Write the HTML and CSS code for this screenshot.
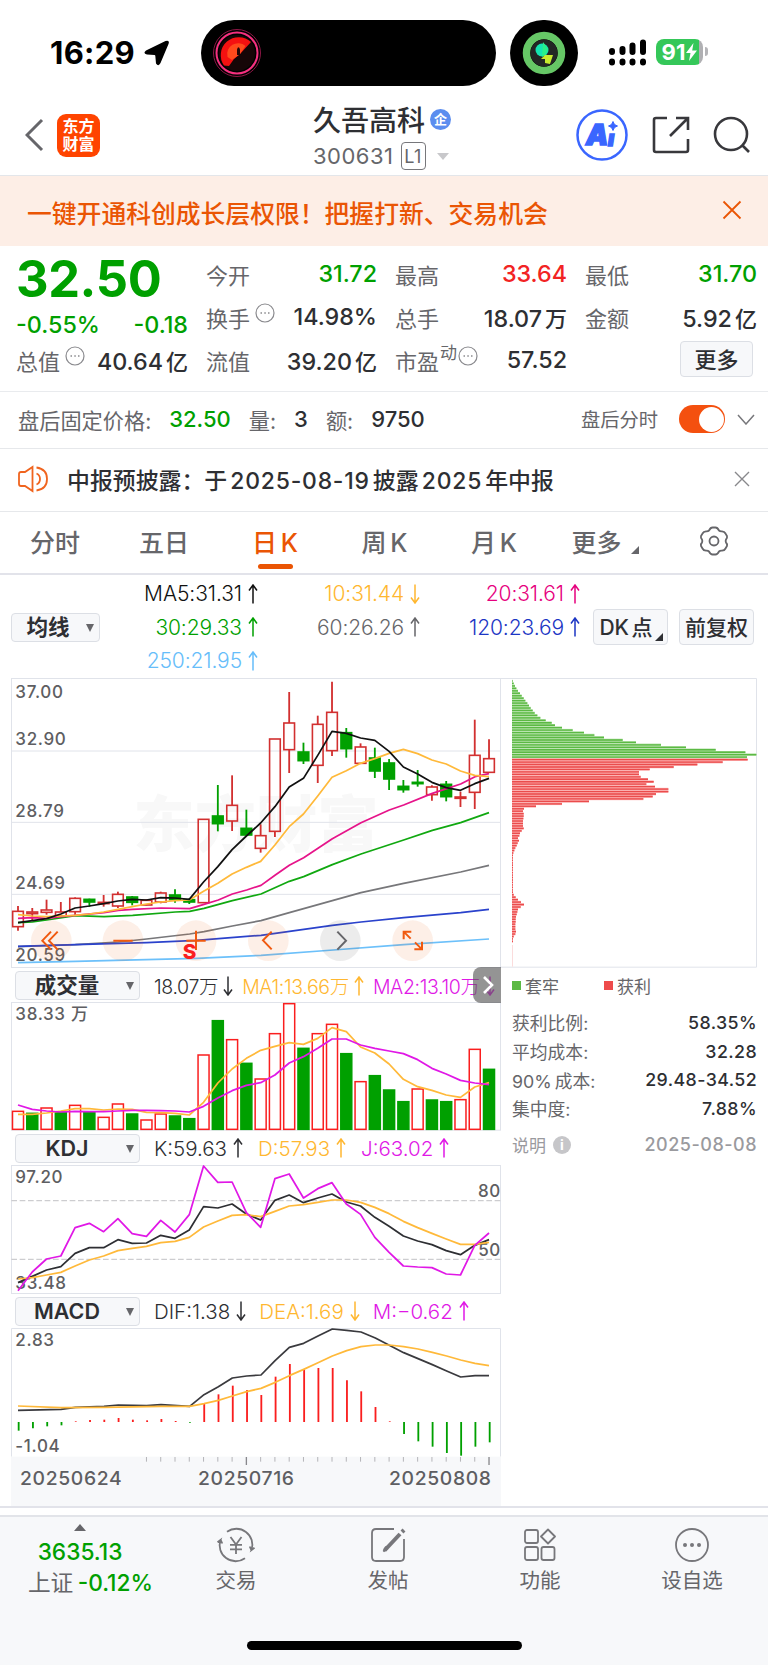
FILE: index.html
```html
<!DOCTYPE html>
<html lang="zh-CN">
<head>
  <meta charset="UTF-8">
  <meta name="viewport" content="width=device-width, initial-scale=1">
  <title>久吾高科 300631</title>
  <link rel="stylesheet" href="styles.css">
</head>
<body>
  <svg class="defs" width="0" height="0">
    <symbol id="up" viewBox="0 0 10 20"><path d="M5 19.500V1M1 6.500L5 1L9 6.500"/></symbol>
    <symbol id="down" viewBox="0 0 10 20"><path d="M5 .5V19M1 13.500L5 19L9 13.500"/></symbol>
    <symbol id="dots" viewBox="0 0 20 20"><circle cx="10" cy="10" r="9"/><path d="M5.500 10h1.500M9.300 10h1.500M13 10h1.500" stroke-width="1.700"/></symbol>
  </svg>

  <div class="status-bar">
    <span class="time">16:29</span>
    <svg class="location" viewBox="0 0 26 26"><path d="M2 10.500L21.500 1Q26 -.5 24.500 4L16.500 23Q14.500 27 12 23.500L11.300 15.800Q11.200 15 10.500 15L3 14.600Q-1.500 13.500 2 10.500Z"/></svg>
    <div class="island">
      <svg width="50" height="50" viewBox="0 0 50 50" fill="none">
        <circle cx="25" cy="25" r="23.500" stroke="#8c1745" stroke-width="1"/>
        <circle cx="25" cy="25" r="20.500" stroke="#f5307f" stroke-width="2"/>
        <circle cx="25" cy="25" r="18" fill="#160607"/>
        <path d="M12 37.500A18 18 0 0 1 39 14L28 26L22 31L17 38Z" fill="#f41111"/>
        <path d="M15.500 29A11 11 0 0 1 33.500 18L28 26L20 32Z" fill="#ff4a1c"/>
        <path d="M25 27V21.500Q26.500 17 28 21.500V27Z" fill="#240707"/>
      </svg>
    </div>
    <div class="bubble">
      <svg width="46" height="46" viewBox="0 0 46 46" fill="none">
        <circle cx="23" cy="23" r="17.500" stroke="#66c766" stroke-width="7.500"/>
        <circle cx="23" cy="23" r="13.500" fill="#232725"/>
        <circle cx="21" cy="20" r="6.500" fill="#14e5b0"/>
        <path d="M22 12l5 7-2 5-4 3z" fill="#29f08a"/>
        <path d="M24 25h8l-3 9-5-1v-4h-4z" fill="#c7ea2e"/>
      </svg>
    </div>
    <svg class="signal" width="38" height="27" viewBox="0 0 38 27">
      <g stroke="#000" stroke-width="6" stroke-linecap="round">
        <path d="M3 12v1M13.500 10v3M23.500 6.500v6.500M34 3.500v9.500M3 22.500v1M13.500 22.500v1M23.500 22.500v1M34 22.500v1"/>
      </g>
    </svg>
    <div class="battery"><span>91</span>
      <svg width="11" height="18" viewBox="0 0 11 18"><path d="M7.500 0L0 10h4.500L3 18L11 7.500H6.200Z" fill="#fff"/></svg>
    </div>
    <i class="battery-cap"></i>
  </div>

  <header class="header">
    <svg class="back" width="20" height="34" viewBox="0 0 20 34"><path d="M17 2L2 17L17 32"/></svg>
    <div class="brand"><span>东方</span><span>财富</span></div>
    <div class="stock">
      <div class="stock-name">久吾高科<span class="tag-corp">企</span></div>
      <div class="stock-code">300631<span class="level">L1</span><i class="caret"></i></div>
    </div>
    <div class="header-icons">
      <div class="ai">
        <svg width="52" height="52" viewBox="0 0 52 52"><circle cx="26" cy="26" r="24.500" fill="none" stroke="#3a66ff" stroke-width="2.500"/><text x="10" y="36">A</text><text class="ai-i" x="32" y="36.500">ı</text><path d="M37 12.500l1.500 3 3 1.500-3 1.500-1.500 3-1.500-3-3-1.500 3-1.500z" fill="#3a66ff" stroke="#3a66ff" stroke-width="1"/></svg>
      </div>
      <svg class="share" width="38" height="38" viewBox="0 0 38 38"><path d="M15 2H4Q2 2 2 4V34Q2 36 4 36H34Q36 36 36 34V23M24 2H36V14M36 2L18 20"/></svg>
      <svg class="search" width="38" height="38" viewBox="0 0 38 38"><circle cx="18" cy="18" r="16"/><path d="M29.500 29.500L36 36"/></svg>
    </div>
  </header>

  <div class="banner">
    <span>一键开通科创成长层权限！把握打新、交易机会</span>
    <svg width="20" height="20" viewBox="0 0 20 20"><path d="M1.500 1.500L18.500 18.500M18.500 1.500L1.500 18.500"/></svg>
  </div>

  <section class="quote">
    <div class="quote-main">
      <div class="price">32.50</div>
      <div class="row green change"><b>-0.55%</b><b>-0.18</b></div>
      <div class="row"><span>总值<svg class="dots"><use href="#dots"/></svg></span><b>40.64<em>亿</em></b></div>
    </div>
    <div class="quote-col">
      <div class="row"><span>今开</span><b class="green">31.72</b></div>
      <div class="row"><span>换手<svg class="dots"><use href="#dots"/></svg></span><b>14.98%</b></div>
      <div class="row"><span>流值</span><b>39.20<em>亿</em></b></div>
    </div>
    <div class="quote-col">
      <div class="row"><span>最高</span><b class="red">33.64</b></div>
      <div class="row"><span>总手</span><b>18.07<em>万</em></b></div>
      <div class="row"><span>市盈<sup>动</sup><svg class="dots tight"><use href="#dots"/></svg></span><b>57.52</b></div>
    </div>
    <div class="quote-col">
      <div class="row"><span>最低</span><b class="green">31.70</b></div>
      <div class="row"><span>金额</span><b>5.92<em>亿</em></b></div>
      <div class="row row-more"><button class="btn btn-more">更多</button></div>
    </div>
  </section>

  <section class="after-hours">
    <span class="ah-label">盘后固定价格:</span><b class="green ah-price">32.50</b>
    <span>量:</span><b class="ah-vol">3</b>
    <span>额:</span><b>9750</b>
    <span class="ah-switch">盘后分时</span>
    <i class="toggle"></i>
    <svg class="chevron" width="18" height="11" viewBox="0 0 18 11"><path d="M1 1L9 10L17 1"/></svg>
  </section>

  <section class="notice">
    <svg class="speaker" width="31" height="28" viewBox="0 0 31 28"><path d="M14.500 2V26L7 21H3Q1 21 1 19V9Q1 7 3 7H7ZM18.500 8.500Q22 10 22 14T18.500 19.500M18.500 2.500Q29 4 29 14T18.500 25.500"/></svg>
    <span class="notice-text">中报预披露：于 <i>2025-08-19</i> 披露 <i>2025</i> 年中报</span>
    <svg class="notice-close" width="16" height="16" viewBox="0 0 16 16"><path d="M1 1L15 15M15 1L1 15"/></svg>
  </section>

  <nav class="tabs">
    <a>分时</a>
    <a>五日</a>
    <a class="active">日 K</a>
    <a>周 K</a>
    <a>月 K</a>
    <a class="tab-more">更多<i class="corner"></i></a>
    <a><svg width="30" height="30" viewBox="0 0 30 30"><path d="M10 4.500Q11.500 1.500 13.500 1.500H16.500Q18.500 1.500 20 4.500Q21 5.500 23 5.300Q25.500 5.500 26.500 7.500L28 10Q28.500 12 27 13.500Q26.300 15 27 16.500Q28.500 18 28 20L26.500 22.500Q25.500 24.500 23 24.700Q21 24.500 20 25.500Q18.500 28.500 16.500 28.500H13.500Q11.500 28.500 10 25.500Q9 24.500 7 24.700Q4.500 24.500 3.500 22.500L2 20Q1.500 18 3 16.500Q3.700 15 3 13.500Q1.500 12 2 10L3.500 7.500Q4.500 5.500 7 5.300Q9 5.500 10 4.500Z"/><circle cx="15" cy="15" r="4.500"/></svg></a>
  </nav>

  <section class="ma-bar">
    <div class="select select-ma">均线</div>
    <div class="ma-grid">
      <span class="c-black">MA5:31.31<svg class="arr"><use href="#up"/></svg></span>
      <span class="c-yellow">10:31.44<svg class="arr"><use href="#down"/></svg></span>
      <span class="c-pink">20:31.61<svg class="arr"><use href="#up"/></svg></span>
      <span class="c-green">30:29.33<svg class="arr"><use href="#up"/></svg></span>
      <span class="c-gray">60:26.26<svg class="arr"><use href="#up"/></svg></span>
      <span class="c-blue">120:23.69<svg class="arr"><use href="#up"/></svg></span>
      <span class="c-sky">250:21.95<svg class="arr"><use href="#up"/></svg></span>
    </div>
    <div class="ma-buttons">
      <button class="btn btn-dk">DK 点<i class="corner"></i></button>
      <button class="btn">前复权</button>
    </div>
  </section>

  <main class="charts">
    <div class="charts-left">
      <svg id="kline" class="kline" viewBox="33 324 1470 870"></svg>
      <div class="indicator">
        <div class="select">成交量</div>
        <div class="values volume-values">
          <span>18.07万<svg class="arr"><use href="#down"/></svg></span>
          <span class="c-yellow">MA1:13.66万<svg class="arr"><use href="#up"/></svg></span>
          <span class="c-magenta">MA2:13.10万<svg class="arr"><use href="#down"/></svg></span>
        </div>
        <div class="expand"><svg width="12" height="20" viewBox="0 0 12 20"><path d="M2 2L10 10L2 18"/></svg></div>
      </div>
      <svg id="volume" class="sub" viewBox="33 111 1470 387"></svg>
      <div class="indicator">
        <div class="select">KDJ</div>
        <div class="values">
          <span>K:59.63<svg class="arr"><use href="#up"/></svg></span>
          <span class="c-yellow">D:57.93<svg class="arr"><use href="#up"/></svg></span>
          <span class="c-magenta">J:63.02<svg class="arr"><use href="#up"/></svg></span>
        </div>
      </div>
      <svg id="kdj" class="sub" viewBox="33 15 1470 387"></svg>
      <div class="indicator">
        <div class="select">MACD</div>
        <div class="values macd-values">
          <span>DIF:1.38<svg class="arr"><use href="#down"/></svg></span>
          <span class="c-yellow">DEA:1.69<svg class="arr"><use href="#down"/></svg></span>
          <span class="c-magenta">M:−0.62<svg class="arr"><use href="#up"/></svg></span>
        </div>
      </div>
      <svg id="macd" class="macd" viewBox="33 504 1470 534"></svg>
    </div>
    <aside class="charts-right">
      <svg id="chips" class="chips" viewBox="3 24 768 870"></svg>
      <div class="legend"><span><i class="sq sq-green"></i>套牢</span><span><i class="sq sq-red"></i>获利</span></div>
      <dl class="chip-stats">
        <dt>获利比例:</dt><dd>58.35%</dd>
        <dt>平均成本:</dt><dd>32.28</dd>
        <dt>90% 成本:</dt><dd>29.48-34.52</dd>
        <dt>集中度:</dt><dd>7.88%</dd>
      </dl>
      <div class="chip-note"><span>说明<i class="info">i</i></span><span>2025-08-08</span></div>
    </aside>
  </main>

  <footer class="bottom">
    <div class="index">
      <i class="caret-up"></i>
      <b class="green">3635.13</b>
      <div>上证 <b class="green">-0.12%</b></div>
    </div>
    <div class="item">
      <svg width="40" height="36" viewBox="0 0 40 36"><path d="M11 4.800A16 16 0 0 1 35.500 23L38.500 20.800M35.500 23.500L33.700 19.500M29 31.200A16 16 0 0 1 4.500 13L1.500 15.200M4.500 12.500L6.300 16.500M14.500 10L20 17.500L25.500 10M20 17.500V27M14 17.800H26M14 22.300H26"/></svg>
      <span>交易</span>
    </div>
    <div class="item">
      <svg width="36" height="36" viewBox="0 0 36 36"><path d="M24 2H6Q2 2 2 6V30Q2 34 6 34H30Q34 34 34 30V12"/><path d="M30 7L14.500 23.500" stroke-width="4"/><path d="M32 5L34 3" stroke-width="4"/><path d="M13.500 24.500L17 22L15.500 20.500Z"/></svg>
      <span>发帖</span>
    </div>
    <div class="item">
      <svg width="32" height="34" viewBox="0 0 32 34"><rect x="1" y="2" width="13" height="13" rx="2"/><path d="M24 1.500L31 8.500L24 15.500L17 8.500Z" stroke-linejoin="round"/><rect x="1" y="19" width="13" height="13" rx="2"/><rect x="17.500" y="19" width="13" height="13" rx="2"/></svg>
      <span>功能</span>
    </div>
    <div class="item">
      <svg width="36" height="36" viewBox="0 0 36 36"><circle cx="18" cy="18" r="16"/><path d="M11 18h.01M18 18h.01M25 18h.01" stroke-width="4" stroke-linecap="round"/></svg>
      <span>设自选</span>
    </div>
    <div class="home-indicator"></div>
  </footer>

  <script src="charts.js"></script>
</body>
</html>
```

FILE: styles.css
```css
* {
  box-sizing: border-box;
}

body {
  margin: 0;
  width: 768px;
  height: 1665px;
  overflow: hidden;
  display: flex;
  flex-direction: column;
  background: #fff;
  color: #2e2f33;
  font-family: Inter, "Noto Sans CJK SC", sans-serif;
  font-size: 22px;
}

svg {
  flex: none;
}

i, em {
  font-style: normal;
}

b {
  font-weight: 500;
}

.defs {
  position: absolute;
}

.green { color: #00a000; }
.red { color: #f22323; }

/* status bar */
.status-bar {
  height: 104px;
  flex: none;
  display: flex;
  align-items: center;
  padding: 2px 0 0 50px;
}

.time {
  width: 94px;
  margin-top: -2px;
  font-size: 31px;
  font-weight: 700;
  letter-spacing: 0.3px;
  color: #000;
}

.location {
  width: 26px;
  height: 26px;
}

.island {
  width: 295px;
  height: 66px;
  margin-left: 31px;
  padding: 0 11px;
  border-radius: 33px;
  background: #000;
  display: flex;
  align-items: center;
}

.bubble {
  width: 68px;
  height: 66px;
  margin: 0 31px 0 14px;
  border-radius: 34px;
  background: #000;
  display: flex;
  align-items: center;
  justify-content: center;
}

.battery {
  width: 47px;
  height: 26px;
  margin: -3px 0 0 9px;
  border-radius: 8px;
  background: linear-gradient(90deg, #35c759 91%, #b0b0b3 91%);
  display: flex;
  align-items: center;
  justify-content: center;
  gap: 1px;
  color: #fff;
  font-size: 22px;
  font-weight: 700;
}

.battery-cap {
  width: 3px;
  height: 9px;
  margin: -3px 0 0 2px;
  border-radius: 0 3px 3px 0;
  background: #b5b5b8;
}

.signal {
  margin-top: -1px;
}

/* header */
.header {
  height: 72px;
  flex: none;
  display: flex;
  align-items: center;
  padding: 0 17px 9px 25px;
  border-bottom: 1px solid #e3e6ea;
}

.back path {
  fill: none;
  stroke: #66666a;
  stroke-width: 3;
}

.brand {
  width: 43px;
  height: 43px;
  margin-left: 12px;
  padding-top: 3px;
  border-radius: 9px;
  background: #ff4400;
  color: #fff;
  font-size: 16px;
  font-weight: 700;
  line-height: 18px;
  display: flex;
  flex-direction: column;
  align-items: center;
}

.stock {
  width: 152px;
  margin: 7px 0 0 213px;
}

.stock-name {
  display: flex;
  align-items: center;
  height: 35px;
  font-size: 28px;
  font-weight: 500;
}

.tag-corp {
  width: 21px;
  height: 21px;
  margin-left: 5px;
  border-radius: 50%;
  background: #5b8def;
  color: #fff;
  font-size: 13px;
  font-weight: 700;
  line-height: 20px;
  text-align: center;
}

.stock-code {
  display: flex;
  align-items: center;
  height: 39px;
  color: #66666a;
  font-size: 22px;
  letter-spacing: 0.5px;
}

.level {
  width: 25px;
  height: 28px;
  margin-left: 7px;
  border: 1px solid #77777b;
  border-radius: 4px;
  font-size: 18px;
  line-height: 27px;
  text-align: center;
}

.caret {
  margin-left: 11px;
  border: 6.5px solid transparent;
  border-top: 7px solid #c8c8cb;
  border-bottom: 0;
}

.header-icons {
  margin-left: auto;
  display: flex;
  align-items: center;
}

.ai {
  height: 52px;
  margin-right: 24px;
}

.ai text {
  fill: #3a66ff;
  stroke: #3a66ff;
  stroke-width: 1.5;
  font-size: 28px;
  font-weight: 900;
  font-style: italic;
}

.ai .ai-i {
  font-size: 21px;
}

.share,
.search {
  fill: none;
  stroke: #38383c;
  stroke-width: 2.6;
}

.search {
  margin-left: 23px;
}

/* promo banner */
.banner {
  height: 70px;
  flex: none;
  display: flex;
  align-items: center;
  justify-content: space-between;
  padding: 1px 26px 0 27px;
  background: #fdeee6;
  color: #ea5504;
  font-size: 24.8px;
  font-weight: 500;
}

.banner svg {
  margin-top: -3px;
  fill: none;
  stroke: #ea5504;
  stroke-width: 1.8;
}

/* quote */
.quote {
  height: 146px;
  flex: none;
  display: grid;
  grid-template-columns: 172px 171px 172px 172px;
  gap: 18px;
  padding: 6px 12px 0 16px;
  border-bottom: 1px solid #e9ebee;
}

.quote .row {
  height: 43px;
  display: flex;
  align-items: center;
  justify-content: space-between;
  font-size: 22px;
  white-space: nowrap;
}

.row span {
  color: #66666a;
  display: flex;
  align-items: center;
}

.row b {
  font-size: 23.3px;
}

.row em {
  margin-left: 3px;
  font-size: 22px;
}

.price {
  height: 50px;
  color: #00a000;
  font-size: 50.5px;
  font-weight: 700;
  line-height: 54px;
  letter-spacing: -0.4px;
}

.quote .change {
  height: 36px;
  padding-top: 8px;
}

.dots {
  width: 20px;
  height: 20px;
  margin: -7px 0 0 5px;
  fill: none;
  stroke: #8a8a8e;
  stroke-width: 1.2;
}

.dots.tight {
  margin-left: 1px;
}

.row sup {
  font-size: 17px;
  line-height: 1;
  margin: -12px 0 0 1px;
  vertical-align: baseline;
}

.btn {
  padding: 0 0 2px;
  height: 36px;
  border: 1px solid #dcdfe5;
  border-radius: 4px;
  background: #f7f8fa;
  color: #2e2f33;
  font-family: inherit;
  font-size: 22px;
  font-weight: 500;
}

.quote .row-more {
  justify-content: flex-end;
  padding-right: 4px;
  padding-bottom: 2px;
}

.btn-more {
  width: 73px;
}

/* after hours */
.after-hours {
  height: 57px;
  flex: none;
  display: flex;
  align-items: center;
  padding: 0 13px 2px 18px;
  border-bottom: 1px solid #e6e8eb;
  color: #66666a;
  font-size: 21.2px;
}

.after-hours b {
  margin: 0 18px;
  color: #2e2f33;
  font-size: 22px;
}

.after-hours b.green {
  color: #00a000;
}

.ah-switch {
  margin-left: auto;
  font-size: 19.3px;
}

.toggle {
  width: 46px;
  height: 28px;
  margin: 0 12px 0 21px;
  padding: 1.5px;
  border-radius: 14px;
  background: #f4500f;
}

.toggle::after {
  content: "";
  display: block;
  width: 25px;
  height: 25px;
  margin-left: auto;
  border-radius: 50%;
  background: #fff;
}

.chevron {
  fill: none;
  stroke: #77777b;
  stroke-width: 1.5;
}

/* notice */
.notice {
  height: 63px;
  flex: none;
  display: flex;
  align-items: center;
  padding: 0 18px 2px;
  border-bottom: 1px solid #e6e8eb;
  font-size: 22.9px;
  font-weight: 500;
}

.notice svg {
  fill: none;
  stroke: #88888c;
  stroke-width: 1.4;
}

.notice .speaker {
  stroke: #f0641e;
  stroke-width: 1.8;
}

.notice-text {
  margin-left: 18px;
  word-spacing: -3px;
  white-space: nowrap;
}

.notice-text i {
  letter-spacing: 0.8px;
}

.notice-close {
  margin-left: auto;
}

/* tabs */
.tabs {
  height: 63px;
  flex: none;
  display: grid;
  grid-template-columns: 110px 108px 114px 105px 114px 108px 109px;
  align-items: center;
  border-bottom: 2px solid #e2e3ea;
  color: #66666a;
  font-size: 25px;
  font-weight: 500;
  word-spacing: -3px;
}

.tabs a {
  height: 61px;
  padding-bottom: 3px;
  display: flex;
  align-items: center;
  justify-content: center;
  position: relative;
}

.tabs .active {
  color: #ea5504;
}

.tabs .active::after {
  content: "";
  position: absolute;
  bottom: 4px;
  width: 35px;
  height: 5px;
  border-radius: 3px;
  background: #ea5504;
}

.tabs svg {
  fill: none;
  stroke: #66666a;
  stroke-width: 1.8;
}

.corner {
  border-left: 8px solid transparent;
  border-bottom: 8px solid currentColor;
}

.tab-more .corner {
  margin: 18px 0 0 9px;
}

/* moving averages */
.ma-bar {
  height: 103px;
  flex: none;
  display: flex;
  align-items: center;
  padding: 1px 0 0 11px;
}

.select {
  width: 125px;
  height: 29px;
  padding-right: 21px;
  border: 1px solid #dcdfe5;
  border-radius: 4px;
  background: #f7f8fa;
  font-size: 21.5px;
  font-weight: 600;
  line-height: 26px;
  text-align: center;
  position: relative;
  flex: none;
}

.select::after {
  content: "";
  position: absolute;
  right: 5px;
  top: 10px;
  border: 4.5px solid transparent;
  border-top: 8px solid #66666a;
  border-bottom: 0;
}

.select-ma {
  width: 89px;
  padding-right: 15px;
}

.ma-grid {
  display: grid;
  grid-template-columns: 158px 162px 160px;
  grid-auto-rows: 33.500px;
  align-items: center;
  justify-items: end;
  font-size: 21px;
  font-weight: 300;
  letter-spacing: -0.1px;
}

.arr {
  width: 10px;
  height: 20px;
  margin-left: 6px;
  vertical-align: -2.5px;
  fill: none;
  stroke: currentColor;
  stroke-width: 1.5;
}

.c-black { color: #111; }
.c-yellow { color: #ffb730; }
.c-pink { color: #e6007e; }
.c-green { color: #00a000; }
.c-gray { color: #66666a; }
.c-blue { color: #1c36c4; }
.c-sky { color: #66bdfa; }
.c-magenta { color: #e018e6; }

.ma-buttons {
  display: flex;
  gap: 11px;
  margin-left: 13px;
}

.ma-buttons .btn {
  width: 75px;
  font-size: 21px;
  white-space: nowrap;
  word-spacing: -3px;
  position: relative;
}

.ma-buttons .btn-dk {
  padding-right: 9px;
}

.btn-dk .corner {
  position: absolute;
  right: 4px;
  bottom: 3px;
}

/* charts */
.charts {
  height: 830px;
  flex: none;
  display: flex;
  padding-left: 11px;
  border-bottom: 2px solid #e2e3ea;
}

.charts-left {
  width: 490px;
}

.charts-left > svg,
.charts-right > svg {
  display: block;
}

.kline {
  width: 490px;
  height: 290px;
}

.sub {
  width: 490px;
  height: 129px;
}

.macd {
  width: 490px;
  height: 178px;
}

.charts svg text {
  font-size: 51px;
  font-weight: 500;
  fill: #5e5e62;
  letter-spacing: 2px;
}

.charts svg .date {
  font-size: 58px;
  letter-spacing: 1.9px;
}

.charts svg .watermark {
  font-size: 184px;
  font-weight: 900;
  letter-spacing: 0;
  fill: #f8f8f8;
}

.charts svg .sell {
  font-size: 62px;
  font-weight: 800;
  fill: #fa1e1e;
}

.indicator {
  height: 34px;
  display: flex;
  align-items: center;
  padding-left: 4px;
  position: relative;
}

.values {
  margin-left: 14px;
  display: flex;
  gap: 15px;
  font-size: 20.5px;
  font-weight: 300;
  white-space: nowrap;
}

.macd-values {
  gap: 13px;
}

.volume-values {
  gap: 9px;
  font-size: 19.5px;
  letter-spacing: -0.35px;
}

.volume-values .arr {
  margin-left: 5px;
}

.expand {
  position: absolute;
  right: 0;
  top: -1px;
  width: 28px;
  height: 36px;
  padding: 8px 9px;
  border-radius: 8px 0 0 8px;
  background: rgba(90, 90, 90, 0.65);
}

.expand svg {
  display: block;
  fill: none;
  stroke: #fff;
  stroke-width: 2.6;
}

.charts-right {
  width: 256px;
}

.chips {
  width: 256px;
  height: 290px;
}

.legend {
  display: flex;
  margin: 5px 0 0 11px;
  height: 24px;
  align-items: center;
  color: #66666a;
  font-size: 17px;
}

.legend span {
  width: 92px;
  display: flex;
  align-items: center;
}

.sq {
  width: 9px;
  height: 9px;
  margin-right: 4px;
}

.sq-green { background: #5cb944; }
.sq-red { background: #ee4b4b; }

.chip-stats {
  margin: 11px 0 0 11px;
  display: grid;
  grid-template-columns: auto auto;
  grid-auto-rows: 28.700px;
  align-items: center;
  color: #66666a;
  font-size: 17.8px;
  word-spacing: -2px;
}

.chip-stats dd {
  margin: 0;
  color: #2e2f33;
  font-weight: 500;
  text-align: right;
  letter-spacing: 0.4px;
}

.chip-note {
  margin: 8px 0 0 11px;
  height: 28px;
  display: flex;
  align-items: center;
  justify-content: space-between;
  color: #9a9a9e;
  font-size: 17px;
}

.chip-note span {
  display: flex;
  align-items: center;
}

.chip-note span:last-child {
  font-size: 18px;
  font-weight: 500;
  letter-spacing: 0.5px;
}

.info {
  width: 18px;
  height: 18px;
  margin-left: 7px;
  border-radius: 50%;
  background: #c6c6c9;
  color: #fff;
  font-size: 14px;
  font-weight: 700;
  line-height: 18px;
  text-align: center;
}

/* bottom bar */
.bottom {
  height: 150px;
  flex: none;
  margin-top: 7px;
  border-top: 2px solid #e2e4e9;
  background: #f7f8fa;
  display: flex;
  color: #66666a;
  font-size: 20.5px;
  position: relative;
}

.index {
  width: 160px;
  display: flex;
  flex-direction: column;
  align-items: center;
  padding: 7px 0 0 0;
  font-size: 22.7px;
  line-height: 31px;
  white-space: nowrap;
}

.index > div {
  margin-left: 21px;
  word-spacing: -2px;
}

.caret-up {
  border: 6.5px solid transparent;
  border-bottom: 7px solid #66666a;
  border-top: 0;
  margin-bottom: 5px;
}

.item {
  width: 152px;
  display: flex;
  flex-direction: column;
  align-items: center;
  padding-top: 10px;
}

.item svg {
  height: 36px;
  fill: none;
  stroke: #77777b;
  stroke-width: 1.8;
}

.item span {
  margin-top: 3px;
  line-height: 30px;
}

.home-indicator {
  position: absolute;
  left: 247px;
  bottom: 15px;
  width: 275px;
  height: 9px;
  border-radius: 5px;
  background: #000;
}
```

FILE: charts.js
```js
const START = 54;
const STEP = 42.82;
const RED = '#d23030';
const GREEN = '#00a000';
const GRID = '#e0e3ea';

const cx = i => START + STEP * i;

function line(x1, y1, x2, y2, color, w = 3, extra = '') {
  return `<line x1="${x1}" y1="${y1}" x2="${x2}" y2="${y2}" stroke="${color}" stroke-width="${w}" ${extra}/>`;
}

function rect(x, y, w, h, fill, stroke = 'none', sw = 3) {
  return `<rect x="${x}" y="${y}" width="${w}" height="${h}" fill="${fill}" stroke="${stroke}" stroke-width="${sw}"/>`;
}

function text(x, y, str, cls = '', anchor = 'start') {
  return `<text x="${x}" y="${y}" class="${cls}" text-anchor="${anchor}">${str}</text>`;
}

// one value per day
function series(values, color, w = 5.2) {
  const pts = values.map((v, i) => `${cx(i)},${v}`).join(' ');
  return poly(pts, color, w);
}

function poly(pts, color, w = 5.2) {
  return `<polyline points="${pts}" fill="none" stroke="${color}" stroke-width="${w}" stroke-linejoin="round"/>`;
}

// K line: [up, high, top, bottom, low]
const candles = [
  [1, 1008, 1024, 1070, 1082], [1, 1014, 1026, 1031, 1052], [1, 989, 1020, 1027, 1034],
  [1, 996, 1026, 1038, 1040], [1, 982, 985, 1025, 1034], [0, 986, 988, 996, 1010],
  [1, 975, 997, 1001, 1010], [1, 965, 973, 1008, 1014], [0, 978, 981, 997, 1006],
  [1, 988, 991, 1005, 1006], [1, 965, 969, 996, 1000], [0, 958, 975, 989, 998],
  [0, 985, 989, 996, 1002], [1, 748, 748, 998, 998], [0, 645, 738, 761, 784],
  [1, 616, 706, 753, 783], [0, 719, 775, 795, 797], [1, 763, 797, 835, 848],
  [1, 507, 507, 784, 801], [1, 366, 459, 539, 609], [0, 518, 546, 572, 582],
  [1, 437, 463, 586, 639], [1, 335, 427, 542, 558], [0, 474, 488, 536, 563],
  [1, 520, 531, 580, 582], [0, 533, 564, 603, 624], [0, 567, 579, 627, 660],
  [0, 630, 649, 659, 668], [0, 600, 637, 641, 650], [1, 646, 651, 674, 692],
  [0, 633, 643, 680, 694], [1, 665, 681, 685, 711], [1, 449, 556, 667, 717],
  [1, 508, 566, 607, 607]
];

function drawKline() {
  let s = text(400, 832, '东方财富', 'watermark');
  s += rect(34.5, 325.5, 1467, 867, 'none', GRID);
  [543, 757, 973].forEach(y => { s += line(34, y, 1503, y, GRID); });

  candles.forEach(([up, hi, top, bottom, lo], i) => {
    const x = cx(i);
    const color = up ? RED : GREEN;
    s += line(x, hi, x, top, color, 5.5) + line(x, bottom, x, lo, color, 5.5);
    s += rect(x - 16, top, 32, bottom - top, up ? 'none' : color, color, 4.8);
  });

  s += poly('54,1178 226,1174 590,1165 783,1156 1000,1140 1211,1124 1467,1107', '#6cc0fa');
  s += poly('54,1130 226,1124 355,1116 440,1107 569,1092 612,1085 697,1068 783,1052 868,1028 997,992 1083,968 1211,940 1382,906 1467,886', '#77777a');
  s += poly('54,1129 226,1124 440,1118 590,1111 783,1096 997,1066 1083,1056 1211,1043 1382,1028 1467,1018', '#2a42cc');
  s += poly('54,1058 97,1056 140,1050 226,1037 312,1040 398,1036 526,1026 569,1024 612,1015 697,992 783,972 868,934 911,920 997,884 1083,852 1211,810 1297,781 1382,758 1467,728', '#10a810');
  s += poly('54,1045 97,1043 140,1045 183,1040 226,1036 312,1028 355,1021 398,1018 483,1014 569,1016 612,1003 655,990 697,972 740,960 783,946 826,915 868,886 911,863 954,835 997,806 1083,758 1168,720 1211,705 1297,670 1340,656 1382,642 1425,620 1467,611', '#e6148a');
  s += series([1034, 1038, 1040, 1038, 1036, 1032, 1026, 1018, 1010, 1002, 996, 992, 990, 964, 940, 912, 892, 874, 825, 770, 732, 678, 622, 602, 580, 566, 550, 538, 551, 570, 582, 603, 616, 620], '#ffb93a');
  s += series([1058, 1052, 1046, 1032, 1014, 1008, 1001, 993, 988, 990, 983, 984, 988, 936, 890, 839, 798, 759, 710, 651, 625, 556, 484, 490, 504, 511, 544, 591, 612, 637, 653, 661, 641, 625], '#111');

  s += text(46, 383, '37.00') + text(46, 525, '32.90') + text(46, 740, '28.79');
  s += text(46, 956, '24.69') + text(46, 1172, '20.59');

  // floating controls
  [154, 369, 588, 805, 1021, 1238].forEach((x, i) => {
    s += `<circle cx="${x}" cy="1112" r="61" fill="${i === 4 ? '#505050' : '#f06e28'}" fill-opacity=".11"/>`;
  });
  s += '<g fill="none" stroke="#f0590f" stroke-width="6">' +
    '<path d="M153 1085L127 1112L153 1139M173 1085L147 1112L173 1139"/>' +
    '<path d="M340 1112H398M559 1112H617M588 1082V1140"/>' +
    '<path d="M815 1085L789 1111L815 1138"/>' +
    '<path d="M1211 1108V1085H1234M1211 1085L1232 1106M1266 1115V1138H1243M1266 1138L1245 1117"/></g>' +
    '<path d="M1012 1085L1038 1112L1012 1139" fill="none" stroke="#66666a" stroke-width="6"/>';
  s += text(548, 1166, 'S', 'sell');
  document.getElementById('kline').innerHTML = s;
}

// volume: [up, top]
const volumes = [
  [1, 438], [0, 444], [1, 428], [0, 440], [1, 420], [0, 440], [1, 456], [1, 416], [0, 446],
  [1, 464], [1, 446], [0, 452], [0, 460], [1, 269], [0, 166], [1, 223], [0, 294], [1, 341],
  [1, 205], [1, 115], [0, 249], [1, 205], [1, 177], [0, 265], [1, 349], [0, 331], [0, 374],
  [0, 409], [1, 371], [0, 404], [0, 409], [1, 403], [1, 252], [0, 312]
];

function drawVolume() {
  let s = rect(34.5, 112.5, 1467, 383, 'none', GRID);
  volumes.forEach(([up, top], i) => {
    const color = up ? '#fa1e1e' : GREEN;
    s += rect(cx(i) - 16.5, top + 1, 33, 492 - top, up ? '#fff' : color, color, 4.5);
  });
  s += series([448, 448, 444, 438, 431, 431, 435, 432, 433, 442, 443, 445, 450, 412, 354, 312, 280, 256, 244, 233, 238, 220, 188, 200, 246, 264, 297, 343, 365, 376, 390, 397, 366, 353], '#ffb93a');
  s += series([420, 433, 438, 441, 439, 440, 440, 438, 436, 436, 437, 438, 441, 424, 399, 377, 361, 353, 330, 294, 275, 250, 222, 222, 240, 250, 258, 266, 284, 310, 327, 346, 354, 359], '#e018e6');
  s += text(46, 164, '38.33 万');
  document.getElementById('volume').innerHTML = s;
}

function drawKdj() {
  let s = rect(34.5, 16.5, 1467, 384, 'none', GRID);
  [122, 298].forEach(y => { s += line(34, y, 1503, y, '#cdcdd0', 4, 'stroke-dasharray="17 8"'); });
  s += text(46, 68, '97.20') + text(46, 388, '33.48');
  s += text(1503, 110, '80', '', 'end') + text(1503, 287, '50', '', 'end');
  s += series([368, 349, 330, 320, 280, 263, 263, 239, 250, 249, 226, 235, 210, 140, 144, 132, 162, 180, 121, 105, 128, 114, 102, 126, 138, 172, 199, 228, 243, 254, 272, 284, 256, 239], '#2e2f33');
  s += series([357, 353, 345, 337, 318, 300, 288, 272, 265, 259, 248, 244, 232, 201, 183, 166, 164, 170, 154, 138, 134, 127, 120, 120, 127, 142, 161, 184, 203, 220, 237, 253, 253, 247], '#ffb93a');
  s += series([392, 336, 297, 288, 203, 190, 215, 176, 221, 229, 181, 216, 164, 18, 67, 66, 158, 202, 56, 42, 114, 86, 68, 132, 163, 232, 277, 318, 321, 323, 342, 345, 256, 219], '#e018e6');
  document.getElementById('kdj').innerHTML = s;
}

function drawMacd() {
  const bars = [812, 805, 799, 796, 784, 780, 779, 774, 779, 781, 777, 783, 788, 732, 703, 677, 690, 705, 650, 612, 628, 624, 624, 661, 694, 741, 784, 822, 844, 860, 879, 887, 860, 847];
  let s = '<path d="M34.500 890V505.500H1501.500V890" fill="none" stroke="' + GRID + '" stroke-width="3"/>';
  s += rect(33, 890, 1470, 148, '#f7f8fa');
  bars.forEach((v, i) => {
    s += line(cx(i) + 2, 786, cx(i) + 2, v, v < 786 ? '#fa1e1e' : GREEN, 5.5);
  });
  s += poly('54,751 183,748 226,742 312,739 355,735 440,737 483,734 569,739 612,704 655,680 697,654 740,648 783,645 826,601 868,562 911,550 954,528 997,507 1040,511 1083,516 1126,534 1168,556 1211,578 1254,596 1297,614 1340,633 1382,651 1425,647 1467,647', '#3a3a3e');
  s += poly('54,738 183,743 312,742 483,739 569,739 612,731 655,721 697,708 740,695 783,685 826,667 868,647 911,628 954,608 997,588 1040,572 1083,560 1126,555 1168,555 1211,560 1254,567 1297,577 1340,588 1382,600 1425,610 1467,617', '#ffb93a');
  for (let i = 9; i < 34; i++) {
    const big = i === 16 || i === 33;
    s += line(cx(i), 891, cx(i), big ? 915 : 905, big ? '#88888c' : '#b4b4b8', big ? 4 : 3);
  }
  s += text(46, 559, '2.83') + text(46, 877, '-1.04');
  s += text(60, 975, '20250624', 'date') + text(739, 975, '20250716', 'date', 'middle') + text(1475, 975, '20250808', 'date', 'end');
  document.getElementById('macd').innerHTML = s;
}

// cost distribution, bar ends from the top price down
const trapped = [38, 41, 45, 49, 54, 60, 65, 71, 76, 82, 87, 92, 98, 104, 112, 121, 137, 155, 165, 186, 218, 252, 283, 312, 368, 408, 483, 558, 647, 736, 769, 741];
const profit = [743, 668, 592, 521, 449, 417, 417, 422, 444, 461, 439, 465, 505, 505, 468, 458, 430, 267, 186, 108, 72, 69, 71, 71, 70, 69, 69, 69, 71, 65, 60, 58, 54, 57, 53, 50, 46, 43, 40,
  39, 39, 39, 39, 39, 39, 39, 39, 39, 39, 39, 39, 39, 39, 39, 39, 41, 47, 54, 63, 72, 62, 54, 52, 50, 48, 47, 47, 46, 46, 46, 48, 46, 41, 39, 39];

function drawChips() {
  let s = '<path d="M3 25.500H769.500V891.500H3" fill="none" stroke="' + GRID + '" stroke-width="3"/>';
  const pitch = 7.37;
  trapped.forEach((x, i) => {
    const y = 33 + i * pitch;
    s += rect(36, y - 3.7, x - 36, 7.4, '#a6dc98') + line(36, y, x, y, '#5cb944', 4);
  });
  profit.forEach((x, i) => {
    const y = 33 + (i + trapped.length) * pitch;
    s += rect(36, y - 3.7, x - 36, 7.4, '#fb9c9c') + line(36, y, x, y, '#ea4c4c', 4);
  });
  s += line(37.5, 825, 37.5, 890, '#fbdcdc', 3);
  document.getElementById('chips').innerHTML = s;
}

drawKline();
drawVolume();
drawKdj();
drawMacd();
drawChips();
```
